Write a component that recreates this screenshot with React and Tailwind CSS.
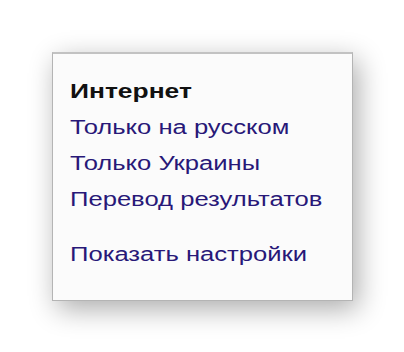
export default function App() {
  const links = ["Только на русском", "Только Украины", "Перевод результатов"];

  return (
    <div className="h-[352px] w-[404px] overflow-hidden bg-white pl-[52px] pt-[52px] font-['Liberation_Sans',Arial,sans-serif]">
      <div className="h-[249px] w-[301px] border border-t-2 border-[#b4b4b4] border-t-[#c2c2c2] bg-[#fbfbfb] px-[17px] pt-[19px] text-[20px] leading-[36px] shadow-[5px_8px_26px_rgba(0,0,0,0.33)]">
        <div className="origin-left scale-x-[1.32] whitespace-nowrap font-bold text-[#111111]">
          Интернет
        </div>
        {links.map((label) => (
          <div
            key={label}
            className="origin-left scale-x-[1.28] whitespace-nowrap text-[#281878]"
          >
            {label}
          </div>
        ))}
        <div className="mt-[19px] origin-left scale-x-[1.28] whitespace-nowrap text-[#281878]">
          Показать настройки
        </div>
      </div>
    </div>
  );
}
